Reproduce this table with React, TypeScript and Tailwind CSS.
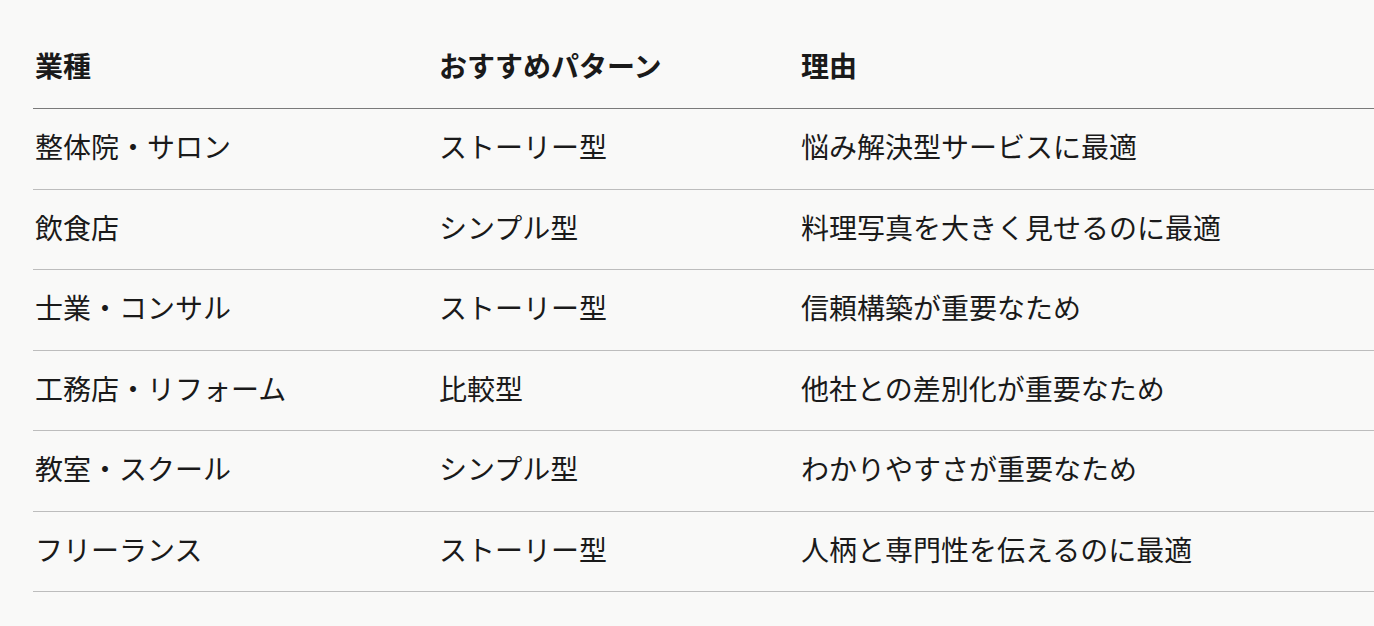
import React from 'react'

const rows = [
  ['整体院・サロン', 'ストーリー型', '悩み解決型サービスに最適'],
  ['飲食店', 'シンプル型', '料理写真を大きく見せるのに最適'],
  ['士業・コンサル', 'ストーリー型', '信頼構築が重要なため'],
  ['工務店・リフォーム', '比較型', '他社との差別化が重要なため'],
  ['教室・スクール', 'シンプル型', 'わかりやすさが重要なため'],
  ['フリーランス', 'ストーリー型', '人柄と専門性を伝えるのに最適'],
]

function App() {
  return (
    <div
      className="min-h-screen bg-[#f9f9f8] text-[#1a1a1a] pt-[28px] pl-[33px]"
      style={{ fontFamily: '"Noto Sans CJK JP", "Noto Sans", sans-serif' }}
    >
      {/* Header */}
      <div className="grid grid-cols-[404px_362px_1fr] h-[81px] items-center border-b border-[#7a7a7a] text-[28px] font-bold pb-[6px]">
        <div className="pl-[2px]">業種</div>
        <div className="pl-[2px]">おすすめパターン</div>
        <div className="pl-[2px]">理由</div>
      </div>

      {/* Rows */}
      {rows.map((r, i) => (
        <div
          key={i}
          className="grid grid-cols-[404px_362px_1fr] h-[80.5px] items-center border-b border-[#bdbdbd] text-[28px] pb-[5px]"
        >
          <div className="pl-[2px]">{r[0]}</div>
          <div className="pl-[2px]">{r[1]}</div>
          <div className="pl-[2px]">{r[2]}</div>
        </div>
      ))}
    </div>
  )
}

export default App
